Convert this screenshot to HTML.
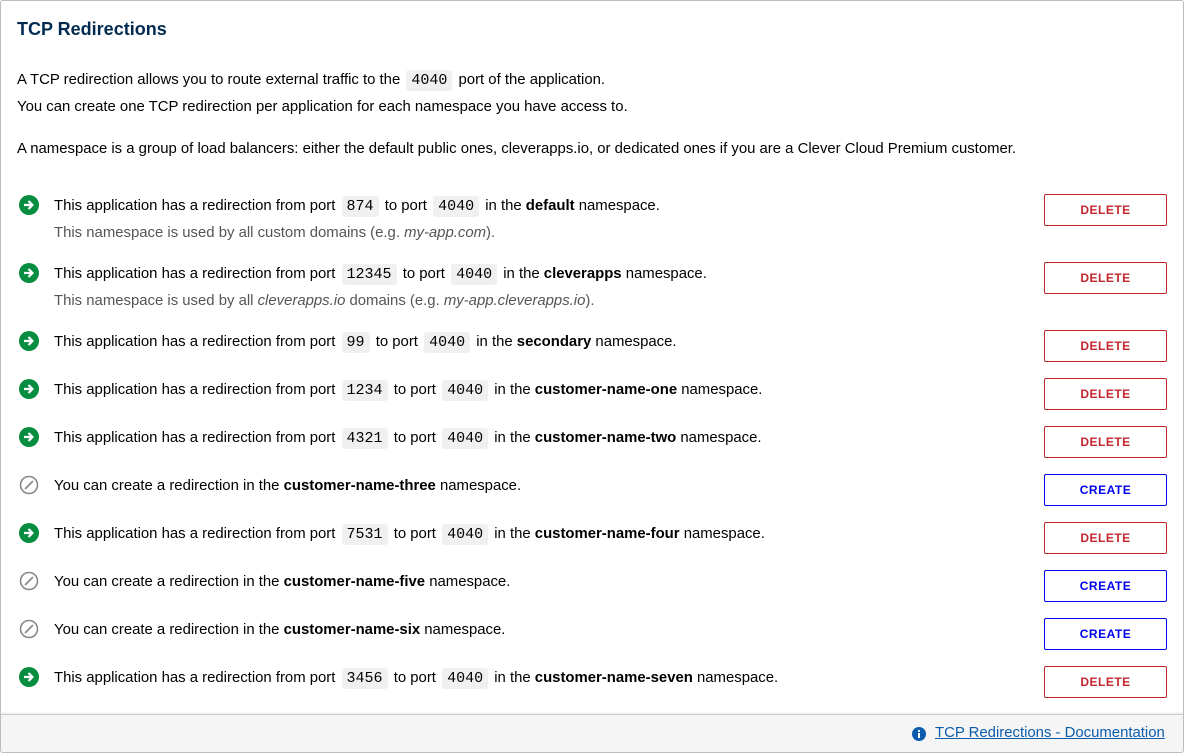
<!DOCTYPE html>
<html><head><style>
*{margin:0;padding:0;box-sizing:border-box}
body{width:1184px;height:753px;background:#fff;font-family:"Liberation Sans",sans-serif;font-size:14.9px;color:#000;position:relative;overflow:hidden}
.card{position:absolute;left:0;top:0;width:1184px;height:753px;border:1px solid #bcbcbc;border-radius:3px;overflow:hidden}
.abs{position:absolute;white-space:nowrap;margin-top:2px}
h1{position:absolute;left:16px;top:18px;font-size:18px;font-weight:bold;color:#012a51}
code{font-family:"Liberation Mono",monospace;font-size:15px;background:#f0f0f0;border-radius:3px;padding:2px 5px;margin:0 2px}
.sub{color:#555}
.btn{position:absolute;left:1043px;width:123px;height:32px;margin-top:-1px;border:1px solid #c1272d;border-radius:2px;color:#c1272d;font-weight:bold;font-size:12px;text-align:center;line-height:30px;letter-spacing:.5px}
.btn.c{border-color:#0000ee;color:#0000ee}
.ic{position:absolute;left:18px;width:20px;height:20px;margin-top:-1px}
.foot{position:absolute;left:0;top:713px;width:1184px;height:40px;background:#f5f5f5;border-top:1px solid #ccc;box-shadow:0 -1px 2px rgba(0,0,0,.1)}
a{color:#0b5cad}
</style></head><body><div class="card">
<h1>TCP Redirections</h1>
<div class="abs" style="left:16px;top:69px">A TCP redirection allows you to route external traffic to the <code>4040</code> port of the application.</div>
<div class="abs" style="left:16px;top:96px">You can create one TCP redirection per application for each namespace you have access to.</div>
<div class="abs" style="left:16px;top:138px">A namespace is a group of load balancers: either the default public ones, cleverapps.io, or dedicated ones if you are a Clever Cloud Premium customer.</div>

<svg width="0" height="0" style="position:absolute"><defs>
<symbol id="ok" viewBox="0 0 20 20"><circle cx="10" cy="10" r="10" fill="#068d3f"/><path d="M5 10h8M9.5 6l4 4-4 4" stroke="#fff" stroke-width="2.2" fill="none"/></symbol>
<symbol id="no" viewBox="0 0 20 20"><circle cx="10" cy="10" r="8.5" fill="none" stroke="#888" stroke-width="1.6"/><path d="M6 14L14 6" stroke="#888" stroke-width="1.6"/></symbol>
</defs></svg>

<svg class="ic" style="top:195px"><use href="#ok"/></svg>
<div class="abs" style="left:53px;top:195px">This application has a redirection from port <code>874</code> to port <code>4040</code> in the <b>default</b> namespace.</div>
<div class="abs sub" style="left:53px;top:222px">This namespace is used by all custom domains (e.g. <i>my-app.com</i>).</div>
<div class="btn" style="top:194px">DELETE</div>

<svg class="ic" style="top:263px"><use href="#ok"/></svg>
<div class="abs" style="left:53px;top:263px">This application has a redirection from port <code>12345</code> to port <code>4040</code> in the <b>cleverapps</b> namespace.</div>
<div class="abs sub" style="left:53px;top:290px">This namespace is used by all <i>cleverapps.io</i> domains (e.g. <i>my-app.cleverapps.io</i>).</div>
<div class="btn" style="top:262px">DELETE</div>

<svg class="ic" style="top:331px"><use href="#ok"/></svg>
<div class="abs" style="left:53px;top:331px">This application has a redirection from port <code>99</code> to port <code>4040</code> in the <b>secondary</b> namespace.</div>
<div class="btn" style="top:330px">DELETE</div>

<svg class="ic" style="top:379px"><use href="#ok"/></svg>
<div class="abs" style="left:53px;top:379px">This application has a redirection from port <code>1234</code> to port <code>4040</code> in the <b>customer-name-one</b> namespace.</div>
<div class="btn" style="top:378px">DELETE</div>

<svg class="ic" style="top:427px"><use href="#ok"/></svg>
<div class="abs" style="left:53px;top:427px">This application has a redirection from port <code>4321</code> to port <code>4040</code> in the <b>customer-name-two</b> namespace.</div>
<div class="btn" style="top:426px">DELETE</div>

<svg class="ic" style="top:475px"><use href="#no"/></svg>
<div class="abs" style="left:53px;top:475px">You can create a redirection in the <b>customer-name-three</b> namespace.</div>
<div class="btn c" style="top:474px">CREATE</div>

<svg class="ic" style="top:523px"><use href="#ok"/></svg>
<div class="abs" style="left:53px;top:523px">This application has a redirection from port <code>7531</code> to port <code>4040</code> in the <b>customer-name-four</b> namespace.</div>
<div class="btn" style="top:522px">DELETE</div>

<svg class="ic" style="top:571px"><use href="#no"/></svg>
<div class="abs" style="left:53px;top:571px">You can create a redirection in the <b>customer-name-five</b> namespace.</div>
<div class="btn c" style="top:570px">CREATE</div>

<svg class="ic" style="top:619px"><use href="#no"/></svg>
<div class="abs" style="left:53px;top:619px">You can create a redirection in the <b>customer-name-six</b> namespace.</div>
<div class="btn c" style="top:618px">CREATE</div>

<svg class="ic" style="top:667px"><use href="#ok"/></svg>
<div class="abs" style="left:53px;top:667px">This application has a redirection from port <code>3456</code> to port <code>4040</code> in the <b>customer-name-seven</b> namespace.</div>
<div class="btn" style="top:666px">DELETE</div>

<div class="foot">
<svg style="position:absolute;left:911px;top:12px" width="14" height="14" viewBox="0 0 14 14"><circle cx="7" cy="7" r="7" fill="#0b5cad"/><rect x="6" y="6" width="2" height="5" fill="#fff"/><circle cx="7" cy="4" r="1.1" fill="#fff"/></svg>
<a class="abs" style="left:934px;top:8px" href="#">TCP Redirections - Documentation</a>
</div>
</div></body></html>
